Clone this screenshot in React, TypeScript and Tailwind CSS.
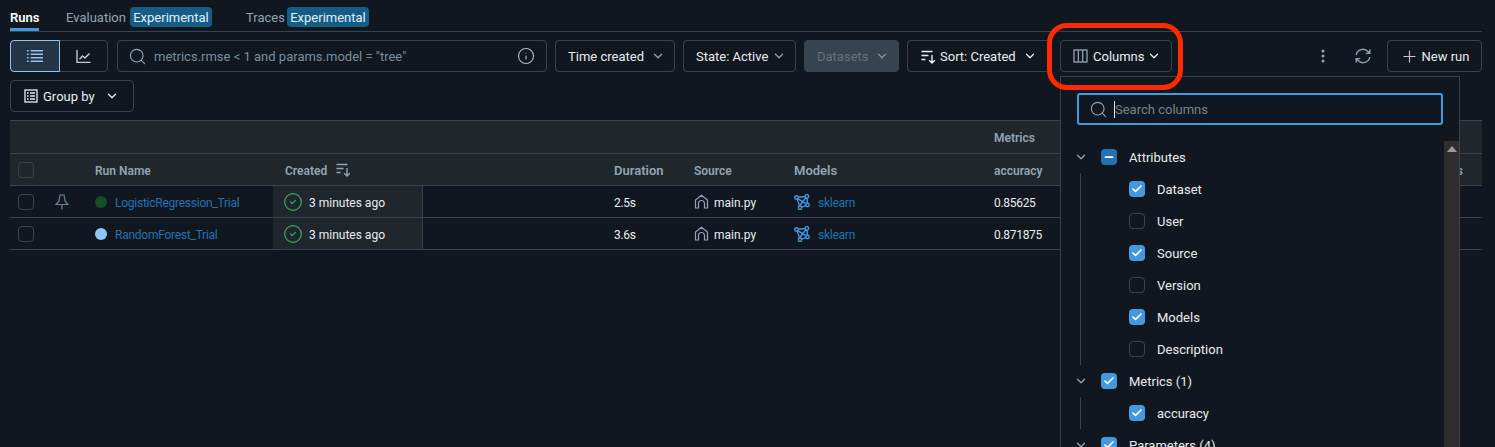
import { ChevronDown, Search, Info, Plus, CircleCheck, Check, Minus } from "lucide-react";
import type { ReactNode } from "react";

const SortIcon = ({ className = "" }: { className?: string }) => (
  <svg width="15" height="15" viewBox="0 0 15 15" fill="none" stroke="currentColor" strokeWidth="1.4" className={className}>
    <path d="M0.5 2.500h11M0.500 6.500h7M0.500 10.500h4M11 6v8M8.200 11.200l2.800 2.800 2.800-2.800" />
  </svg>
);

const ListIcon = () => (
  <svg width="16" height="16" viewBox="0 0 16 16" fill="none" stroke="currentColor" strokeWidth="1.5" className="text-[#8fc5f0]">
    <path d="M0 2.700h1.600M3.600 2.700H16M0 6.200h1.600M3.600 6.200H16M0 9.700h1.600M3.600 9.700H16M0 13.200h1.600M3.600 13.200H16" />
  </svg>
);

const ChartIcon = () => (
  <svg width="15" height="15" viewBox="0 0 15 15" fill="none" stroke="currentColor" strokeWidth="1.4">
    <path d="M1 1v12.400h13.500M3.500 10.200l3-3.200 2.400 2 4.600-4.600" />
  </svg>
);

const GroupIcon = () => (
  <svg width="14" height="14" viewBox="0 0 14 14" fill="none" stroke="currentColor" strokeWidth="1.3">
    <rect x="1" y="1" width="12" height="12" />
    <path d="M3 4h1.600M6 4h5M3 7h1.600M6 7h5M3 10h1.600M6 10h5" />
  </svg>
);

const ColumnsIcon = () => (
  <svg width="15" height="14" viewBox="0 0 15 14" fill="none" stroke="currentColor" strokeWidth="1.3">
    <rect x="1" y="1" width="13" height="12" />
    <path d="M5.300 1v12M9.700 1v12" />
  </svg>
);

const KebabIcon = () => (
  <svg width="4" height="14" viewBox="0 0 4 14" fill="currentColor">
    <circle cx="2" cy="2" r="1.500" />
    <circle cx="2" cy="7" r="1.500" />
    <circle cx="2" cy="12" r="1.500" />
  </svg>
);

const RefreshIcon = () => (
  <svg width="16" height="16" viewBox="0 0 16 16" fill="none" stroke="currentColor" strokeWidth="1.4">
    <path d="M1.200 7A6.800 6.800 0 0 1 13 3.600L14.800 5.400M14.800 1.400v4h-4M14.800 9A6.800 6.800 0 0 1 3 12.400L1.200 10.600M1.200 14.600v-4h4" />
  </svg>
);

const PinIcon = () => (
  <svg width="14" height="16" viewBox="0 0 14 16" fill="none" stroke="currentColor" strokeWidth="1.2">
    <path d="M5 1h4l1.200 6.500L13 10.500H1l2.800-3zM7 10.500V15.500" />
  </svg>
);

const HomeIcon = () => (
  <svg width="15" height="15" viewBox="0 0 15 15" fill="none" stroke="currentColor" strokeWidth="1.2">
    <path d="M1.500 14V6l6-4.800L13.500 6v8h-3V9.500a3 3 0 0 0-6 0V14z" />
  </svg>
);

const ModelsIcon = () => (
  <svg width="16" height="16" viewBox="0 0 16 16" fill="none" stroke="#4299e0" strokeWidth="1.400">
    <circle cx="2.500" cy="3.500" r="1.700" />
    <circle cx="13" cy="2.300" r="1.700" />
    <circle cx="13.500" cy="11" r="1.700" />
    <circle cx="6" cy="13.700" r="1.700" />
    <path d="M4.200 3.300l7.100-.8M13 4l.4 5.300M11.800 11.700l-4 1.400M3.300 5.100l2.300 6.900M3.900 4.600l8.200 5.300M11.800 3.700l-6.400 8.300" />
  </svg>
);

// Roboto sits a little higher than the original font, this nudges labels down
const Label = ({ children, className = "" }: { children: ReactNode; className?: string }) => (
  <span className={`pt-[2px] ${className}`}>{children}</span>
);

const Button = ({ children, className = "" }: { children: ReactNode; className?: string }) => (
  <div className={`flex h-8 shrink-0 items-center whitespace-nowrap rounded border border-[#37444f] ${className}`}>
    {children}
  </div>
);

const Chevron = ({ className = "" }: { className?: string }) => (
  <ChevronDown size={14} strokeWidth={2.200} className={className} />
);

const Badge = ({ children }: { children: ReactNode }) => (
  <span className="ml-1 flex h-5 w-[82px] items-center justify-center rounded bg-[#155d87] text-[#e3f0f8]">
    <Label>{children}</Label>
  </span>
);

type BoxState = "on" | "off" | "some";

const Box = ({ state }: { state: BoxState }) => {
  if (state === "off") return <span className="block size-4 shrink-0 rounded border border-[#37444f]" />;
  if (state === "some")
    return (
      <span className="flex size-4 shrink-0 items-center justify-center rounded bg-[#2272b4] text-white">
        <Minus size={12} strokeWidth={3.500} />
      </span>
    );
  return (
    <span className="flex size-4 shrink-0 items-center justify-center rounded bg-[#4299e0] text-white">
      <Check size={12} strokeWidth={3.500} />
    </span>
  );
};

const runs = [
  { name: "LogisticRegression_Trial", dot: "bg-[#115026]", duration: "2.5s", accuracy: "0.85625", pinned: true },
  { name: "RandomForest_Trial", dot: "bg-[#8fc5f8]", duration: "3.6s", accuracy: "0.871875", pinned: false },
];

const attributes: { label: string; state: BoxState }[] = [
  { label: "Dataset", state: "on" },
  { label: "User", state: "off" },
  { label: "Source", state: "on" },
  { label: "Version", state: "off" },
  { label: "Models", state: "on" },
  { label: "Description", state: "off" },
];

const TreeGroup = ({ label, state }: { label: string; state: BoxState }) => (
  <div className="flex h-8 items-center">
    <div className="flex w-[29px] justify-center pr-[11px] text-[#92a4b3]">
      <Chevron />
    </div>
    <Box state={state} />
    <Label className="ml-3 whitespace-nowrap">{label}</Label>
  </div>
);

const TreeChild = ({ label, state }: { label: string; state: BoxState }) => (
  <div className="-ml-px flex h-8 items-center pl-[49px]">
    <Box state={state} />
    <Label className="ml-3">{label}</Label>
  </div>
);

const ColumnsPopover = () => (
  <div className="absolute left-[1060px] top-[76px] h-[371px] w-[400px] overflow-hidden border border-b-0 border-[#37444f] bg-[#11171f]">
    <div className="px-4 pt-4">
      <div className="flex h-8 items-center rounded-[3px] border-2 border-[#4299e0] pl-[10px] text-[#92a4b3]">
        <Search size={19} strokeWidth={1.400} />
        <span className="ml-[6px] h-[17px] w-px bg-[#e8edf2]" />
        <Label className="text-[#6f8494]">Search columns</Label>
      </div>
    </div>
    <div className="relative mt-4 h-[322px] pl-[11px] text-[#e8edf2]">
      <TreeGroup label="Attributes" state="some" />
      <div className="ml-[8px] border-l border-[#37444f]">
        {attributes.map((a) => (
          <TreeChild key={a.label} label={a.label} state={a.state} />
        ))}
      </div>
      <TreeGroup label="Metrics (1)" state="on" />
      <div className="ml-[8px] border-l border-[#37444f]">
        <TreeChild label="accuracy" state="on" />
      </div>
      <TreeGroup label="Parameters (4)" state="on" />
      <div className="absolute right-0 top-0 flex h-full w-[15px] justify-center bg-[#2e2e2e] pt-[5px]">
        <span className="h-0 w-0 border-x-[5px] border-b-[6px] border-x-transparent border-b-[#9a9a9a]" />
      </div>
    </div>
  </div>
);

export default function App() {
  return (
    <div className="relative h-[447px] w-[1495px] overflow-hidden bg-[#11171f] pl-[10px] pr-[13px] font-['Roboto',sans-serif] text-[13px] text-[#e8edf2]">
      <div className="flex h-[32px] items-start border-b border-[#37444f] pt-[6px] text-[#92a4b3]">
        <div className="relative flex h-[25px] w-[29px] items-start pt-[2px] font-semibold text-white">
          Runs
          <span className="absolute bottom-0 left-0 right-0 h-[3px] bg-[#4299e0]" />
        </div>
        <div className="ml-[27px] flex w-[146px] items-center whitespace-nowrap">
          <Label className="w-[60px]">Evaluation</Label>
          <Badge>Experimental</Badge>
        </div>
        <div className="ml-[34px] flex items-center whitespace-nowrap">
          <Label className="w-[37px]">Traces</Label>
          <Badge>Experimental</Badge>
        </div>
      </div>

      <div className="mt-2 flex items-center">
        <div className="flex h-8 w-[98px] shrink-0 rounded border border-[#37444f]">
          <div className="-m-px flex w-[50px] items-center justify-center rounded-l border border-[#8fc5f0] bg-[#263545]">
            <ListIcon />
          </div>
          <div className="flex flex-1 items-center justify-center text-[#c0cdd8]">
            <ChartIcon />
          </div>
        </div>
        <Button className="ml-[9px] w-[430px] pl-[10px] pr-[11px]">
          <Search size={19} strokeWidth={1.400} className="text-[#92a4b3]" />
          <Label className="ml-[7px] flex-1 text-[#7a8e9e]">metrics.rmse &lt; 1 and params.model = "tree"</Label>
          <Info size={18} strokeWidth={1.500} className="text-[#aebbc6]" />
        </Button>
        <Button className="ml-2 w-[120px] justify-between pl-3 pr-[9px]">
          <Label>Time created</Label>
          <Chevron className="text-[#92a4b3]" />
        </Button>
        <Button className="ml-2 w-[113px] justify-between pl-3 pr-[9px]">
          <Label>State: Active</Label>
          <Chevron className="text-[#92a4b3]" />
        </Button>
        <Button className="ml-2 w-[95px] justify-between bg-[#37444f] pl-3 pr-[9px] text-[#5f7281]">
          <Label>Datasets</Label>
          <Chevron className="text-[#8396a5]" />
        </Button>
        <Button className="ml-2 w-[145px] justify-between pl-[13px] pr-[14px]">
          <span className="flex items-center gap-[4px]">
            <SortIcon />
            <Label>Sort: Created</Label>
          </span>
          <Chevron />
        </Button>
        <Button className="ml-2 w-[112px] pl-3">
          <span className="text-[#92a4b3]">
            <ColumnsIcon />
          </span>
          <Label className="ml-[5px]">Columns</Label>
          <Chevron className="ml-[2px]" />
        </Button>
        <div className="ml-[149px] text-[#92a4b3]">
          <KebabIcon />
        </div>
        <div className="ml-[30px] text-[#92a4b3]">
          <RefreshIcon />
        </div>
        <Button className="ml-4 w-[95px] justify-center gap-[3px]">
          <Plus size={19} strokeWidth={1.400} className="text-[#c0cdd8]" />
          <Label>New run</Label>
        </Button>
      </div>

      <div className="mt-2 flex">
        <Button className="w-[124px] pl-[13px]">
          <GroupIcon />
          <Label className="ml-[5px]">Group by</Label>
          <Chevron className="ml-[10px]" />
        </Button>
      </div>

      <div className="mt-2">
        <div className="flex h-[34px] items-center border-y border-[#37444f] bg-[#1f272d] pl-[984px] text-[12px] font-semibold text-[#92a4b3]">
          <span className="pt-px">Metrics</span>
        </div>
        <div className="flex h-8 items-center border-b border-[#37444f] bg-[#1f272d] font-semibold text-[#92a4b3]">
          <div className="w-[75px] pl-2">
            <Box state="off" />
          </div>
          <Label className="w-[188px] pl-[10px] text-[12px]">Run Name</Label>
          <div className="flex w-[150px] items-center gap-[9px] pl-3">
            <Label className="text-[12px]">Created</Label>
            <SortIcon />
          </div>
          <div className="w-[181px]" />
          <Label className="w-[80px] pl-[10px]">Duration</Label>
          <Label className="w-[100px] pl-[10px] text-[12px]">Source</Label>
          <Label className="w-[200px] pl-[10px]">Models</Label>
          <Label className="w-[100px] pl-[10px] text-[12px]">accuracy</Label>
          <Label className="flex-1 pr-[19px] text-right">Models</Label>
        </div>
        {runs.map((run) => (
          <div key={run.name} className="flex h-8 items-stretch border-b border-[#37444f] text-[12px]">
            <div className="flex w-[40px] items-center pl-2">
              <Box state="off" />
            </div>
            <div className="flex w-[35px] items-center pl-[5px] text-[#6f8494]">{run.pinned && <PinIcon />}</div>
            <div className="flex w-[188px] items-center pl-[10px]">
              <span className={`size-3 rounded-full ${run.dot}`} />
              <Label className="ml-2 tracking-[-0.25px] text-[#2272b4]">{run.name}</Label>
            </div>
            <div className="flex w-[150px] items-center gap-[6px] border-r border-[#37444f] bg-[#1f272d] pl-[10px]">
              <CircleCheck size={20} strokeWidth={1.500} className="text-[#3ba65e]" />
              <Label>3 minutes ago</Label>
            </div>
            <div className="w-[181px]" />
            <div className="flex w-[80px] items-center pl-[10px]">
              <Label className="tracking-[-0.3px]">{run.duration}</Label>
            </div>
            <div className="flex w-[100px] items-center gap-[5px] pl-[10px]">
              <span className="text-[#92a4b3]">
                <HomeIcon />
              </span>
              <Label>main.py</Label>
            </div>
            <div className="flex w-[200px] items-center gap-2 pl-[10px]">
              <ModelsIcon />
              <Label className="tracking-[-0.25px] text-[#2272b4]">sklearn</Label>
            </div>
            <div className="flex items-center pl-[10px]">
              <Label className="tracking-[-0.3px]">{run.accuracy}</Label>
            </div>
          </div>
        ))}
      </div>

      <ColumnsPopover />

      <div className="absolute left-[1047px] top-[23px] h-[67px] w-[136px] rounded-[20px] border-[5px] border-[#ff2a00]" />
    </div>
  );
}
